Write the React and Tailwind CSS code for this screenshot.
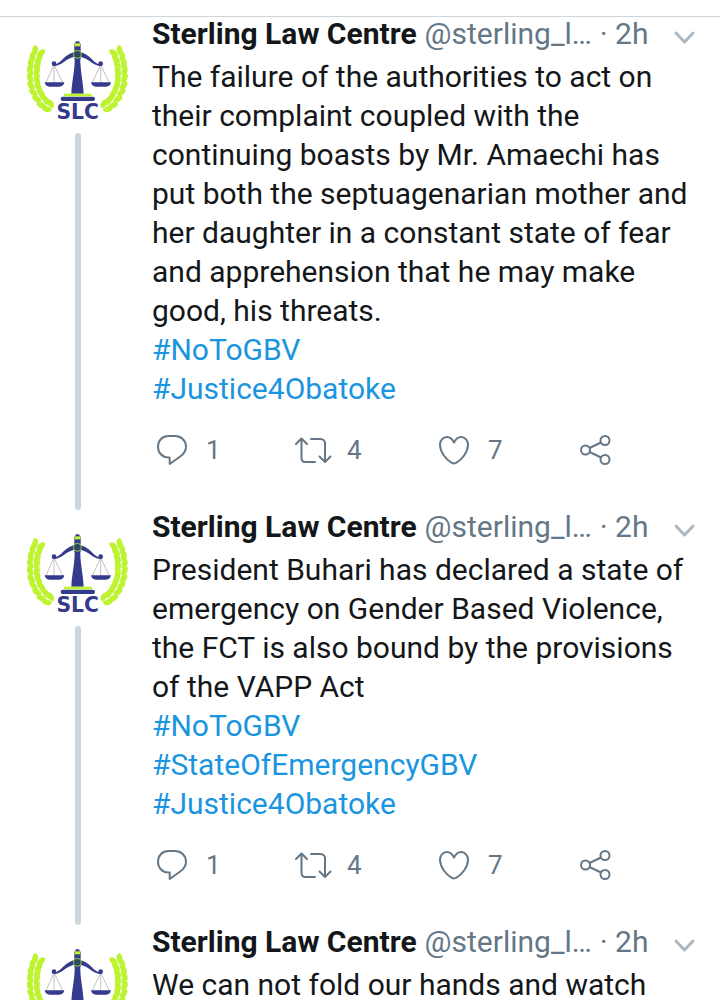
import React from 'react';

const TWEETS = [
  {
    id: 1,
    text: 'The failure of the authorities to act on their complaint coupled with the continuing boasts by Mr. Amaechi has put both the septuagenarian mother and her daughter in a constant state of fear and apprehension that he may make good, his threats.',
    tags: ['#NoToGBV', '#Justice4Obatoke'],
    replies: 1,
    retweets: 4,
    likes: 7
  },
  {
    id: 2,
    text: 'President Buhari has declared a state of emergency on Gender Based Violence, the FCT is also bound by the provisions of the VAPP Act',
    tags: ['#NoToGBV', '#StateOfEmergencyGBV', '#Justice4Obatoke'],
    replies: 1,
    retweets: 4,
    likes: 7
  },
  {
    id: 3,
    text: 'We can not fold our hands and watch',
    tags: []
  }
];

// x, y and direction of the stem at each pair of leaves, bottom to top
const STEM = [
  [150, 322, -145],
  [134, 311, -137],
  [121, 295, -126],
  [111, 277, -116],
  [104, 258, -106],
  [101, 238, -96],
  [100, 218, -87],
  [101, 198, -78],
  [105, 178, -69],
  [112, 159, -62]
];

const Laurel = () => (
  <g fill="#bdf331">
    {STEM.map(([x, y, angle]) => (
      <g key={y} transform={`translate(${x} ${y}) rotate(${angle})`}>
        <path d="M-8 -1C-12 -14 2 -23 18 -18C21 -7 12 1 -8 -1Z" />
        <path d="M-8 1C-12 14 2 23 18 18C21 7 12 -1 -8 1Z" />
      </g>
    ))}
  </g>
);

const Logo = () => (
  <svg viewBox="72 75 324 324" className="h-[108px] w-[108px] shrink-0" role="img" aria-label="Sterling Law Centre">
    <Laurel />
    <g transform="translate(464 0) scale(-1 1)">
      <Laurel />
    </g>
    <g fill="none" stroke="#a3a3a8" strokeWidth="2">
      <path d="M162 194L138 248M162 194V248M162 194L188 248" />
      <path d="M302 194L277 248M302 194V248M302 194L328 248" />
    </g>
    <g fill="#343a8c">
      <path d="M134 247H193C192 255 186 260 178 260H149C141 260 135 255 134 247Z" />
      <path d="M273 247H333C332 255 326 260 318 260H288C280 260 274 255 273 247Z" />
      <circle cx="162" cy="191" r="7" />
      <circle cx="302" cy="191" r="7" />
      <path d="M160 192C184 196 192 157 232 155C272 157 280 196 304 192L303 198C278 200 268 172 232 169C196 172 186 200 161 198Z" />
      <path d="M224 175H241C240 210 249 240 251 281H214C216 240 225 210 224 175Z" />
      <rect x="223" y="130" width="19" height="48" rx="3" />
      <rect x="226" y="124" width="13" height="9" rx="4" />
      <rect x="182" y="290" width="103" height="13" rx="6" />
    </g>
    <path d="M224 130H241V139H224Z" fill="#bdf331" />
    <rect x="192" y="281" width="83" height="8" fill="#bdf331" />
    <circle cx="232" cy="163" r="12" fill="#2c4a60" stroke="#9ccb45" strokeWidth="3" />
    <text x="233" y="358" textAnchor="middle" fontSize="61" fontWeight="700" fill="#343a8c" fontFamily="'DejaVu Sans', sans-serif">SLC</text>
  </svg>
);

const ChevronIcon = () => (
  <svg viewBox="0 0 24 16" className="h-4 w-6" fill="none" stroke="#aab8c2" strokeWidth="3" strokeLinecap="round" strokeLinejoin="round">
    <path d="M4 4L12.500 13L21 4" />
  </svg>
);

const ReplyIcon = () => (
  <svg viewBox="0 0 32 32" className="h-8 w-8" fill="none" stroke="currentColor" strokeWidth="2" strokeLinejoin="round">
    <path d="M12.500 2H19C25 2 30 6.500 30 12.500C30 17 28 19.800 24.500 22.300L13.700 30V23.500H12.500C6 23.500 2 18.500 2 12.700C2 6.500 6.500 2 12.500 2Z" />
  </svg>
);

const RetweetIcon = () => (
  <svg viewBox="0 0 32 32" className="h-8 w-8 overflow-visible" fill="none" stroke="currentColor" strokeWidth="2" strokeLinecap="round" strokeLinejoin="round">
    <path d="M-1 10L4.500 4.500L10 10M4.500 5V24C4.500 26.500 6 28 8.500 28H18" />
    <path d="M14 5H23C25.500 5 28 6.500 28 9V27.500M22.500 22.500L28 28L33.500 22.500" />
  </svg>
);

const HeartIcon = () => (
  <svg viewBox="0 0 32 32" className="h-8 w-8" fill="none" stroke="currentColor" strokeWidth="2" strokeLinejoin="round">
    <path d="M16 8.500C14 4.500 11.500 3 9 3C4.800 3 2 6.500 2 10.800C2 18 8 25.500 13.500 28.700C15.300 29.700 16.700 29.700 18.500 28.700C24 25.500 30 18 30 10.800C30 6.500 27.200 3 23 3C20.500 3 18 4.500 16 8.500Z" />
  </svg>
);

const ShareIcon = () => (
  <svg viewBox="0 0 32 32" className="h-8 w-8" fill="none" stroke="currentColor" strokeWidth="2">
    <circle cx="6.500" cy="16" r="4.500" />
    <circle cx="26" cy="6.500" r="4.500" />
    <circle cx="26" cy="25.500" r="4.500" />
    <path d="M10.500 14L22 8.500M10.500 18L22 23.500" />
  </svg>
);

const Action = ({ icon: Icon, label, count }) => (
  <button type="button" aria-label={label} className="flex h-9 items-center gap-[18px] pl-1">
    <Icon />
    {count !== undefined && <span>{count}</span>}
  </button>
);

function Tweet({ tweet }) {
  return (
    <article className="flex">
      <div className="flex w-[152px] shrink-0 flex-col items-center pt-2 pr-[20px] pl-[24px]">
        <Logo />
        <div className="w-[6px] flex-1 rounded-full bg-[#ccd6dd]" />
      </div>

      <div className="min-w-0 flex-1">
        <header className="flex h-10 items-start pr-6 leading-[34px] text-[#657786]">
          <h2 className="font-bold whitespace-nowrap text-[#14171a]">Sterling Law Centre</h2>
          <span className="ml-2 whitespace-nowrap">@sterling_l…</span>
          <span className="ml-2 whitespace-nowrap">· 2h</span>
          <button type="button" aria-label="More options" className="ml-auto flex h-10 items-center">
            <ChevronIcon />
          </button>
        </header>

        <p className="pr-6 leading-[39px]">{tweet.text}</p>
        {tweet.tags.map(tag => (
          <p key={tag} className="leading-[39px]">
            <a href="#tag" className="text-[#1b95e0]">{tag}</a>
          </p>
        ))}

        <div className="grid grid-cols-4 pt-6 pr-1 pb-[42px] text-[26px] leading-9 text-[#657786]">
          <Action icon={ReplyIcon} label="Reply" count={tweet.replies} />
          <Action icon={RetweetIcon} label="Retweet" count={tweet.retweets} />
          <Action icon={HeartIcon} label="Like" count={tweet.likes} />
          <Action icon={ShareIcon} label="Share" />
        </div>
      </div>
    </article>
  );
}

export default function App() {
  return (
    <main className="h-screen overflow-hidden bg-white font-[Roboto,sans-serif] text-[30px] text-[#14171a]">
      <div className="h-[17px] border-b border-[#ccd6dd]" />
      {TWEETS.map(tweet => (
        <Tweet key={tweet.id} tweet={tweet} />
      ))}
    </main>
  );
}
